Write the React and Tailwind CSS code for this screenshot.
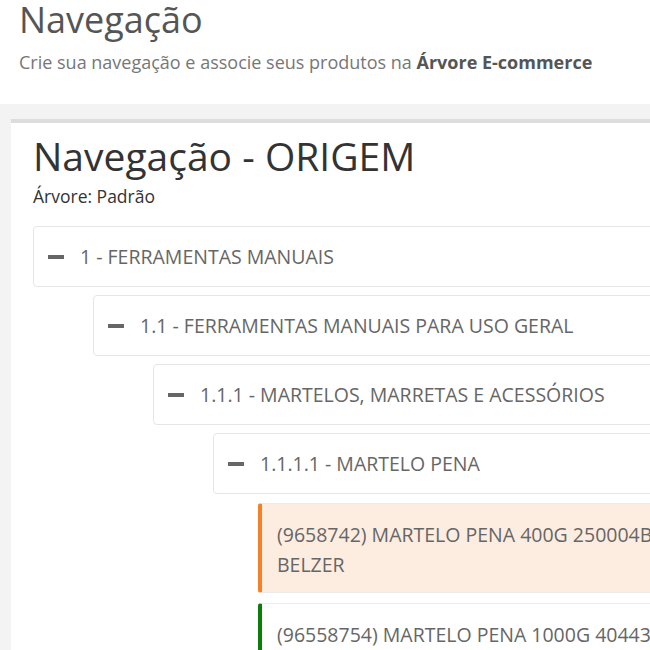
const Minus = () => <span className="block w-4 h-[4px] bg-[#666] shrink-0" />

const TreeNode = ({ indent, label }) => (
  <div className={`${indent} h-[61px] border border-[#e6e6e6] rounded-[4px] flex items-center pl-[14px] gap-4 bg-white`}>
    <Minus />
    <span className="text-[19.5px] text-[#666] leading-none">{label}</span>
  </div>
)

const Product = ({ color, bg, children }) => (
  <div className={`ml-[225px] border border-[#ececec] border-l-4 ${color} ${bg} rounded-l-[3px] pt-[16px] pb-[12px] pl-[15px] pr-4`}>
    <p className="text-[19.5px] text-[#666] leading-[30px] w-[430px]">{children}</p>
  </div>
)

const App = () => {
  return (
    <div className="w-[650px] h-[650px] overflow-hidden bg-[#f3f3f3] font-['Open_Sans',sans-serif]">
      <div className="w-[760px]">
        <div className="bg-white h-[104px] pl-[19px]">
          <h1 className="text-[36px] leading-[40px] text-[#555]">Navegação</h1>
          <p className="mt-[10px] text-[18px] leading-6 text-[#777]">
            Crie sua navegação e associe seus produtos na <b className="text-[#555]">Árvore E-commerce</b>
          </p>
        </div>

        <div className="ml-[11px] mt-[15px] bg-white border-t-4 border-[#dddddd] px-[22px] pt-[11px] pb-6">
          <h2 className="text-[39px] leading-[44px] text-[#333]">Navegação - ORIGEM</h2>
          <p className="mt-[8px] text-[17.5px] leading-5 text-[#333]">Árvore: Padrão</p>

          <div className="mt-[20px] flex flex-col gap-2">
            <TreeNode indent="ml-0" label="1 - FERRAMENTAS MANUAIS" />
            <TreeNode indent="ml-[60px]" label="1.1 - FERRAMENTAS MANUAIS PARA USO GERAL" />
            <TreeNode indent="ml-[120px]" label="1.1.1 - MARTELOS, MARRETAS E ACESSÓRIOS" />
            <TreeNode indent="ml-[180px]" label="1.1.1.1 - MARTELO PENA" />
            <div className="mt-[1px]">
              <Product color="border-l-[#f58025]" bg="bg-[#fdede1]">
                (9658742) MARTELO PENA 400G 250004B BELZER
              </Product>
            </div>
            <div className="mt-[2px]">
              <Product color="border-l-[#0a7d0a]" bg="bg-white">
                (96558754) MARTELO PENA 1000G 404430 BELZER
              </Product>
            </div>
          </div>
        </div>
      </div>
    </div>
  )
}

export default App
